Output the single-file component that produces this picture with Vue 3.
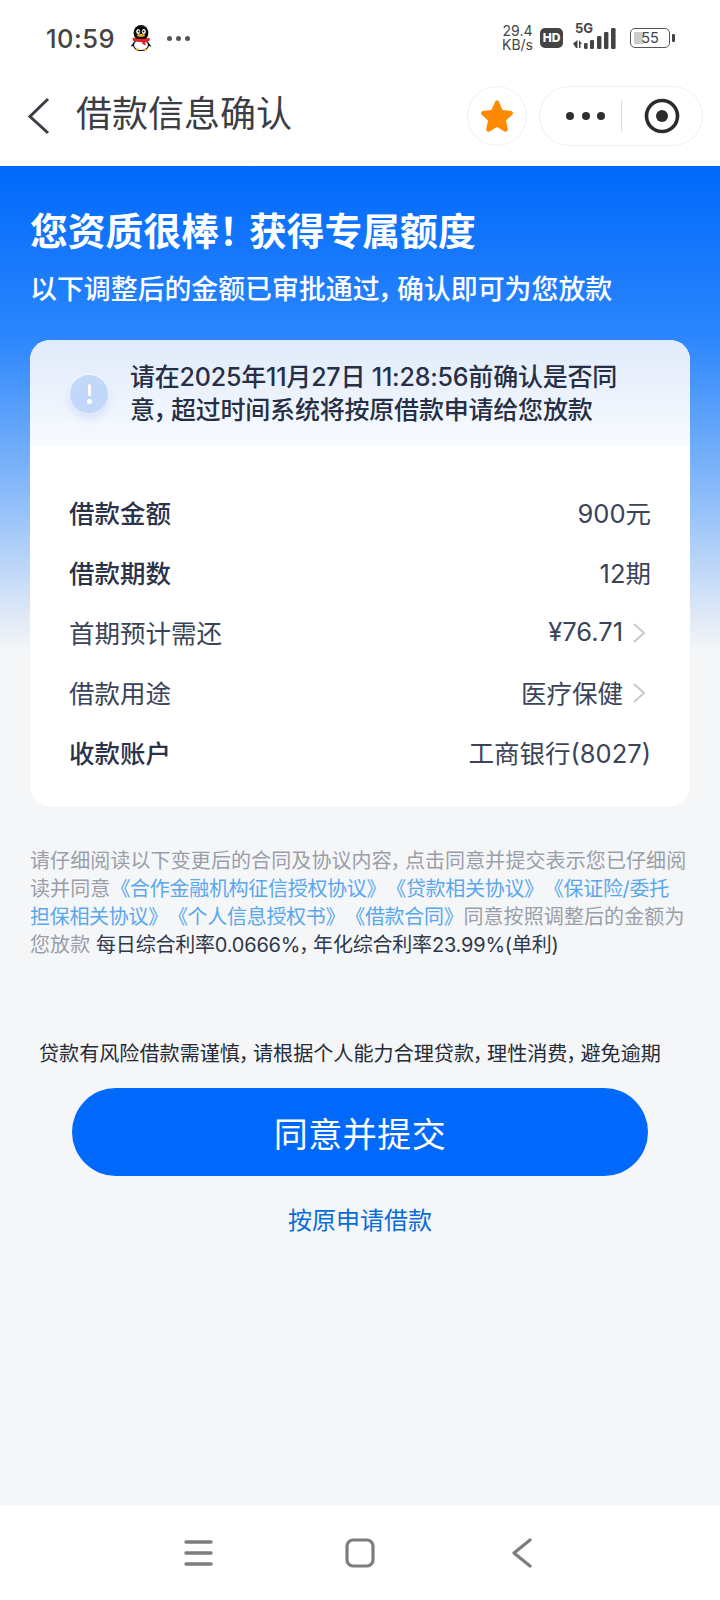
<script setup>
const rows = [
  { label: '借款金额', value: '900元', strong: true },
  { label: '借款期数', value: '12期', strong: true },
  { label: '首期预计需还', value: '¥76.71', arrow: true },
  { label: '借款用途', value: '医疗保健', arrow: true },
  { label: '收款账户', value: '工商银行(8027)', strong: true },
]
</script>

<template>
  <div class="page">
    <div class="status">
      <div class="status-left">
        <span class="time">10:59</span>
        <svg class="qq" width="24" height="26" viewBox="0 0 24 26">
          <ellipse cx="12" cy="20" rx="7.5" ry="5.6" fill="#fff" stroke="#111" stroke-width="1.2"/>
          <path d="M4.5 17.5 1.6 21.6 4.6 21zM19.5 17.5l2.9 4.1-3-.6z" fill="#111"/>
          <ellipse cx="12" cy="8" rx="7.4" ry="8" fill="#0b0b0b"/>
          <ellipse cx="9.2" cy="6.4" rx="2" ry="2.5" fill="#fff"/>
          <ellipse cx="14.8" cy="6.4" rx="2" ry="2.5" fill="#fff"/>
          <circle cx="9.6" cy="6.6" r="1" fill="#111"/>
          <circle cx="14.5" cy="6.6" r="1" fill="#111"/>
          <ellipse cx="12" cy="10.4" rx="4" ry="1.4" fill="#f3b21c"/>
          <path d="M3.6 12.6q8.4 3 16.8 0l.5 2.8q-2.8 1.4-4.6 1.6l.5 3.4-3-1.2-1-2.2q-4.6.2-9-1.6z" fill="#e3212b"/>
          <path d="M6 25.2q2-1.6 4-.4M18 25.2q-2-1.6-4-.4" stroke="#f3b21c" stroke-width="1.4" fill="none"/>
        </svg>
        <span class="dots-small"><i></i><i></i><i></i></span>
      </div>
      <div class="status-right">
        <span class="speed"><span>29.4</span><span>KB/s</span></span>
        <span class="hd">HD</span>
        <span class="net">
          <span class="fiveg">5G</span>
          <svg width="47" height="22" viewBox="0 0 47 22" class="bars">
            <path d="M4.500 12v8H3L0 15.500zM6 12l3 4H7.500v4H6z" fill="#444"/>
            <rect x="11" y="15" width="3.600" height="6" rx="1.200" fill="#444"/>
            <rect x="17" y="12" width="4" height="9" rx="1.200" fill="#444"/>
            <rect x="24" y="8" width="4.400" height="13" rx="1.200" fill="#444"/>
            <rect x="31" y="4" width="4.400" height="17" rx="1.200" fill="#444"/>
            <rect x="38" y="0" width="4.600" height="21" rx="1.200" fill="#444"/>
          </svg>
        </span>
        <span class="battery">
          <span class="batt-body"><i class="batt-fill"></i><b>55</b></span>
          <i class="batt-cap"></i>
        </span>
      </div>
    </div>

    <div class="nav">
      <svg class="back" width="24" height="38" viewBox="0 0 24 38">
        <path d="M21 2 3 19.500 21 36" fill="none" stroke="#3c3f45" stroke-width="3"/>
      </svg>
      <h1 class="nav-title">借款信息确认</h1>
      <span class="star-btn">
        <svg width="34" height="34" viewBox="0 0 34 34">
          <path d="M17 1.600c.9 0 1.600.5 2 1.400l3.500 8 8.500.9c2 .2 2.700 2.500 1.300 3.800l-6.300 5.900 1.800 8.500c.4 1.900-1.600 3.300-3.300 2.300L17 28.100l-7.500 4.300c-1.700 1-3.700-.4-3.300-2.300L8 21.600l-6.300-5.900C.3 14.400 1 12.100 3 11.900l8.500-.9 3.500-8c.4-.9 1.100-1.400 2-1.400z" fill="#ff8a00"/>
        </svg>
      </span>
      <div class="capsule">
        <span class="dots-big"><i></i><i></i><i></i></span>
        <span class="cap-line"></span>
        <svg width="36" height="36" viewBox="0 0 36 36">
          <circle cx="18" cy="18" r="15.500" fill="none" stroke="#2b2b2b" stroke-width="3.600"/>
          <circle cx="18" cy="18" r="6" fill="#2b2b2b"/>
        </svg>
      </div>
    </div>

    <main class="main">
      <div class="hero">
        <h2 class="hero-title">您资质很棒<span class="bang">！</span>获得专属额度</h2>
        <p class="hero-sub">以下调整后的金额已审批通过<span class="comma">，</span>确认即可为您放款</p>
      </div>

      <section class="card">
        <div class="notice">
          <span class="alert"><i class="alert-bar"></i><i class="alert-dot"></i></span>
          <p class="notice-text">请在2025年11月27日 11:28:56前确认是否同意<span class="comma">，</span>超过时间系统将按原借款申请给您放款</p>
        </div>
        <div class="rows">
          <div v-for="row in rows" :key="row.label" class="row">
            <span class="label" :class="{ strong: row.strong }">{{ row.label }}</span>
            <span class="value"><span>{{ row.value }}</span><svg v-if="row.arrow" class="chev" width="14" height="22" viewBox="0 0 14 22">
                <path d="M2 2l10 9-10 9" fill="none" stroke="#c4c6ca" stroke-width="1.800"/>
              </svg></span>
          </div>
        </div>
      </section>

      <p class="legal">请仔细阅读以下变更后的合同及协议内容<span class="comma">，</span>点击同意并提交表示您已仔细阅<br>读并同意<span class="link">《合作金融机构征信授权协议》《贷款相关协议》《保证险/委托<br>担保相关协议》《个人信息授权书》《借款合同》</span>同意按照调整后的金额为<br>您放款 <span class="rate">每日综合利率0.0666%<span class="comma">，</span>年化综合利率23.99%(单利)</span></p>

      <p class="risk">贷款有风险借款需谨慎<span class="comma">，</span>请根据个人能力合理贷款<span class="comma">，</span>理性消费<span class="comma">，</span>避免逾期</p>
      <button class="submit">同意并提交</button>
      <a class="origin">按原申请借款</a>
    </main>

    <footer class="bottom">
      <svg width="30" height="28" viewBox="0 0 30 28">
        <path d="M2 3h25M2 14h25M2 25h25" stroke="#7d7d7d" stroke-width="3.400" stroke-linecap="round"/>
      </svg>
      <svg width="30" height="30" viewBox="0 0 30 30">
        <rect x="2" y="2" width="26" height="26" rx="6" fill="none" stroke="#7d7d7d" stroke-width="3.200"/>
      </svg>
      <svg class="nav-back" width="22" height="30" viewBox="0 0 22 30">
        <path d="M19 2 3 15l16 13" fill="none" stroke="#7d7d7d" stroke-width="3.200" stroke-linecap="round" stroke-linejoin="round"/>
      </svg>
    </footer>
  </div>
</template>

<style>
html, body { margin: 0; padding: 0; background: #fff; }
</style>

<style scoped>
.page {
  width: 720px;
  height: 1600px;
  display: flex;
  flex-direction: column;
  overflow: hidden;
  background: #fff;
  font-family: Inter, "Noto Sans CJK SC", sans-serif;
  font-feature-settings: "palt";
}
.comma { margin-right: .15em; }
.status {
  height: 76px;
  padding: 0 46px;
  box-sizing: border-box;
  display: flex;
  align-items: center;
  justify-content: space-between;
  color: #444;
}
.status-left { display: flex; align-items: center; }
.time { font-size: 25.500px; font-weight: 500; width: 83px; letter-spacing: 0.500px; }
.qq { margin-right: 2px; }
.dots-small { display: flex; gap: 4px; margin-left: 12px; }
.dots-small i { width: 5px; height: 5px; background: #555; border-radius: 50%; }
.status-right { display: flex; align-items: center; margin-right: -1px; }
.speed { display: flex; flex-direction: column; font-size: 14px; line-height: 14px; align-items: center; }
.hd {
  width: 23px; height: 20px; border-radius: 5px; background: #444; color: #fff;
  font-size: 12px; font-weight: 800; line-height: 20px; text-align: center;
  margin-left: 7px;
}
.net { position: relative; width: 47px; height: 22px; margin: 0 0 0 10px; top: 1px; }
.fiveg { position: absolute; left: 2px; top: -7px; font-size: 13px; line-height: 14px; font-weight: 700; }
.bars { display: block; }
.battery { display: flex; align-items: center; margin-left: 10px; }
.batt-body {
  width: 38px; height: 18px; border: 1.500px solid #555; border-radius: 5px; position: relative;
  display: block; box-sizing: content-box;
}
.batt-fill { position: absolute; left: 3px; top: 3px; bottom: 3px; width: 9px; background: #ccc; }
.batt-body b { position: absolute; left: 0; right: 0; top: 0; text-align: center; font-weight: 400; font-size: 14.500px; line-height: 18px; color: #444; }
.batt-cap { width: 3px; height: 8px; background: #444; margin-left: 2px; border-radius: 1px; }

.nav {
  height: 90px;
  display: flex;
  align-items: center;
  padding: 0 0 11px 27px;
  box-sizing: border-box;
  background: #fff;
}
.back { flex: none; }
.nav-title {
  margin: -3px 0 0 25px; font-size: 36px; font-weight: 400; color: #3b3e45;
  width: 391px; white-space: nowrap; line-height: 40px;
  font-feature-settings: normal;
}
.star-btn {
  width: 60px; height: 60px; border: 1px solid #f0f0f0; border-radius: 50%;
  box-sizing: border-box; display: flex; align-items: center; justify-content: center;
}
.capsule {
  width: 164px; height: 60px; margin-left: 12px; border: 1px solid #efefef; border-radius: 30px;
  box-sizing: border-box; display: flex; align-items: center; padding-left: 26px;
}
.dots-big { display: flex; gap: 7.500px; }
.dots-big i { width: 8px; height: 8px; background: #2f2f2f; border-radius: 50%; }
.cap-line { width: 1px; height: 32px; background: #ddd; margin: 0 22px 0 16px; }

.main {
  flex: 1;
  display: flex;
  flex-direction: column;
  padding: 0 30px;
  background: linear-gradient(180deg, #0068fb 0, #2b86fd 170px, #8cbcf9 330px, #dfe9f6 450px, #f4f6f8 485px) #f4f6f8;
}
.hero { padding-top: 41px; color: #fff; }
.hero-title { margin: 0; font-size: 37.800px; line-height: 48px; font-weight: 700; white-space: nowrap; }
.bang { margin-right: 11px; }
.hero-sub { margin: 16px 0 0; font-size: 26.900px; line-height: 37px; font-weight: 500; white-space: nowrap; }

.card { margin-top: 32px; height: 466px; background: #fff; border-radius: 20px; overflow: hidden; }
.notice {
  height: 106px;
  padding: 21px 62px 0 40px;
  box-sizing: border-box;
  display: flex;
  background: linear-gradient(180deg, #e0eafa, #f8fbff);
}
.alert {
  width: 38px; height: 38px; border-radius: 50%; background: #c2d8fa; flex: none;
  margin: 14px 22px 0 0; position: relative;
  box-shadow: 0 5px 8px rgba(120, 160, 230, .25), 0 0 0 2px rgba(255,255,255,.4);
}
.alert-bar { position: absolute; left: 17.500px; top: 9px; width: 3.500px; height: 12px; background: #fff; border-radius: 2px; }
.alert-dot { position: absolute; left: 17px; top: 24px; width: 4.500px; height: 4.500px; background: #fff; border-radius: 50%; }
.notice-text { margin: 0; font-size: 25px; line-height: 33px; font-weight: 500; color: #262f45; letter-spacing: -0.200px; }
.rows { padding: 35px 39px 0; }
.row { height: 60px; display: flex; align-items: center; justify-content: space-between; font-size: 25.500px; color: #3a4458; }
.label.strong { font-weight: 500; color: #2a3349; }
.value { display: flex; align-items: center; white-space: nowrap; }
.chev { margin: 3px 5px 0 9px; }

.legal { margin: 41px 0 0; font-size: 20px; line-height: 28px; color: #9a9ea8; white-space: nowrap; letter-spacing: 0.100px; }
.link { color: #5aa7ee; font-feature-settings: normal; text-spacing-trim: space-all; letter-spacing: -0.300px; }
.rate { color: #30384a; letter-spacing: -0.200px; }
.risk { margin: 80px 0 0 9px; font-size: 20.100px; line-height: 30px; color: #262b36; white-space: nowrap; }
.submit {
  margin: 19px 42px 0; height: 88px; border: 0; border-radius: 44px; background: #0068fb; color: #fff;
  font: inherit; font-size: 34px; letter-spacing: 0.500px;
}
.origin { align-self: center; margin-top: 28px; font-size: 24px; line-height: 34px; color: #0a6cd8; }
.bottom {
  height: 94px; background: #fff; display: flex; align-items: center; justify-content: center;
  padding: 0 3px 0 0; box-sizing: border-box;
  gap: 131px;
}
.nav-back { margin-left: 5px; }
</style>
